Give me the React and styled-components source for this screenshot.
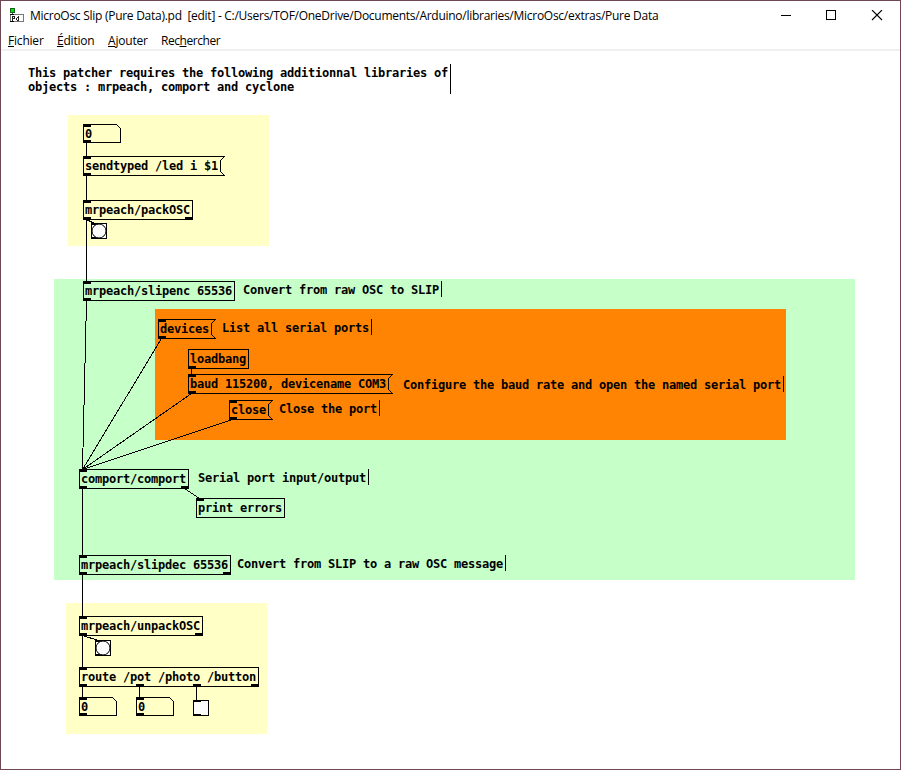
import React from "react";
import styled, { createGlobalStyle } from "styled-components";

const GlobalStyle = createGlobalStyle`
  * { box-sizing: border-box; }
  html, body { margin: 0; padding: 0; background: #fff; overflow: hidden; }
`;

const Window = styled.div`
  width: 901px;
  height: 770px;
  display: flex;
  flex-direction: column;
  border: 1px solid #6e4655;
  background: #fff;
  color: #000;
`;

const TitleBar = styled.header`
  display: flex;
  align-items: center;
  height: 29px;
  padding-left: 9px;
  flex: none;
`;

const AppIcon = styled.svg`
  width: 14px;
  height: 14px;
  margin-bottom: 1px;
  flex: none;
`;

const Title = styled.h1`
  margin: 0 0 0 6px;
  flex: 1;
  font: 400 12px/16px "Open Sans", "Noto Sans", sans-serif;
  letter-spacing: -0.27px;
  white-space: pre;
`;

const WindowControls = styled.div`
  display: flex;
  align-self: stretch;
`;

const ControlButton = styled.button`
  width: 46px;
  height: 29px;
  padding: 0;
  border: 0;
  background: transparent;
  display: flex;
  align-items: center;
  justify-content: center;
`;

const ControlGlyph = styled.svg`
  width: 12px;
  height: 11px;
  fill: none;
  stroke: #000;
`;

const MenuBar = styled.nav`
  display: flex;
  height: 21px;
  padding: 2px 0 0 7px;
  border-bottom: 2px solid #f0f0f0;
  flex: none;
`;

const MenuItem = styled.span`
  width: ${(p) => p.$width}px;
  font: 400 12px/17px "Open Sans", "Noto Sans", sans-serif;
  letter-spacing: ${(p) => p.$spacing || -0.2}px;
  white-space: nowrap;
`;

const AccessKey = styled.span`
  text-decoration: underline;
  text-decoration-thickness: 1px;
  text-underline-offset: 1px;
`;

const ORIGIN = { x: 1, y: 51 };

const Patch = styled.main`
  position: relative;
  flex: 1;
  overflow: hidden;
  font: 700 12px/14px "DejaVu Sans Mono", monospace;
  letter-spacing: -0.2245px;
`;

const Placed = styled.div`
  position: absolute;
  left: ${(p) => p.$x - ORIGIN.x}px;
  top: ${(p) => p.$y - ORIGIN.y}px;
  width: ${(p) => p.$w}px;
  height: ${(p) => p.$h}px;
  white-space: pre;
`;

const Backdrop = styled(Placed)`
  background: ${(p) => p.$color};
`;

const Comment = styled(Placed)`
  padding: 2px 0 0 2px;
  border-right: 1px solid #000;
`;

const NodeFrame = styled(Placed)`
  padding: 3px 0 0 2px;
`;

const NodeOutline = styled.svg`
  position: absolute;
  left: 0;
  top: 0;
  overflow: visible;
  fill: none;
  stroke: #000;
  shape-rendering: crispEdges;
`;

const NodeLabel = styled.span`
  position: relative;
`;

const Wires = styled.svg`
  position: absolute;
  left: 0;
  top: 0;
  width: 899px;
  height: 718px;
  stroke: #000;
  fill: none;
  shape-rendering: crispEdges;
`;

const outlines = {
  object: (w, h) => `M.5 .5H${w - 0.5}V${h - 0.5}H.5Z`,
  message: (w, h) =>
    `M${w} .5H.5V${h - 0.5}H${w}M${w - 0.5} .5L${w - 4.5} 4.5V${h - 4.5}L${w - 0.5} ${h - 0.5}`,
  number: (w, h) => `M.5 .5H${w - 4.5}L${w - 0.5} 4.5V${h - 0.5}H.5Z`,
};

function Node({ kind = "object", x, y, w, h = 20, inlets = [0], outlets = [0], label }) {
  const isControl = kind === "bang" || kind === "toggle";
  const portHeight = isControl ? 2 : 3;
  return (
    <NodeFrame $x={x} $y={y} $w={w} $h={h}>
      <NodeOutline width={w} height={h}>
        <path d={(outlines[kind] || outlines.object)(w, h)} fill={isControl ? "#fcfcfc" : "none"} />
        {inlets.map((px) => (
          <rect key={"i" + px} x={px} y="0" width="8" height={portHeight} fill="#000" stroke="none" />
        ))}
        {outlets.map((px) => (
          <rect key={"o" + px} x={px} y={h - portHeight} width="8" height={portHeight} fill="#000" stroke="none" />
        ))}
        {kind === "bang" && <circle cx="8" cy="8" r="7" fill="#fcfcfc" shapeRendering="geometricPrecision" />}
      </NodeOutline>
      {label && <NodeLabel>{label}</NodeLabel>}
    </NodeFrame>
  );
}

const backdrops = [
  { x: 68, y: 115, w: 201, h: 131, color: "#ffffc6" },
  { x: 54, y: 279, w: 801, h: 301, color: "#c6ffc7" },
  { x: 155, y: 309, w: 631, h: 131, color: "#ff8403" },
  { x: 66, y: 603, w: 201, h: 131, color: "#ffffc6" },
];

const nodes = [
  { kind: "number", x: 83, y: 124, w: 38, h: 19, label: "0" },
  { kind: "message", x: 83, y: 156, w: 142, label: "sendtyped /led i $1" },
  { x: 83, y: 200, w: 110, outlets: [0, 102], label: "mrpeach/packOSC" },
  { kind: "bang", x: 91, y: 223, w: 16, h: 16 },
  { x: 83, y: 281, w: 152, label: "mrpeach/slipenc 65536" },
  { kind: "message", x: 158, y: 319, w: 58, label: "devices" },
  { x: 188, y: 349, w: 61, inlets: [], label: "loadbang" },
  { kind: "message", x: 188, y: 374, w: 205, label: "baud 115200, devicename COM3" },
  { kind: "message", x: 229, y: 400, w: 44, label: "close" },
  { x: 79, y: 469, w: 110, outlets: [0, 102], label: "comport/comport" },
  { x: 196, y: 498, w: 89, outlets: [], label: "print errors" },
  { x: 79, y: 555, w: 152, outlets: [0, 144], label: "mrpeach/slipdec 65536" },
  { x: 79, y: 616, w: 124, outlets: [0, 116], label: "mrpeach/unpackOSC" },
  { kind: "bang", x: 95, y: 640, w: 16, h: 16 },
  { x: 79, y: 667, w: 180, outlets: [0, 57, 114, 172], label: "route /pot /photo /button" },
  { kind: "number", x: 79, y: 697, w: 38, h: 19, label: "0" },
  { kind: "number", x: 136, y: 697, w: 38, h: 19, label: "0" },
  { kind: "toggle", x: 193, y: 700, w: 16, h: 16 },
];

const comments = [
  { x: 26, y: 64, w: 425, h: 30, text: "This patcher requires the following additionnal libraries of\nobjects : mrpeach, comport and cyclone" },
  { x: 241, y: 281, w: 201, text: "Convert from raw OSC to SLIP" },
  { x: 220, y: 319, w: 152, text: "List all serial ports" },
  { x: 401, y: 376, w: 383, text: "Configure the baud rate and open the named serial port" },
  { x: 277, y: 400, w: 103, text: "Close the port" },
  { x: 196, y: 469, w: 173, text: "Serial port input/output" },
  { x: 235, y: 555, w: 271, text: "Convert from SLIP to a raw OSC message" },
];

const wires = [
  [86, 142, 86, 156],
  [86, 175, 86, 200],
  [86, 219, 86, 281],
  [86, 219, 94, 223],
  [86, 300, 82, 469],
  [161, 338, 82, 469],
  [191, 368, 191, 374],
  [191, 393, 82, 469],
  [232, 419, 82, 469],
  [82, 488, 82, 555],
  [184, 488, 199, 498],
  [82, 574, 82, 616],
  [82, 635, 82, 667],
  [82, 635, 98, 640],
  [82, 686, 82, 697],
  [139, 686, 139, 697],
  [196, 686, 196, 700],
];

export default function App() {
  return (
    <>
      <GlobalStyle />
      <Window>
        <TitleBar>
          <AppIcon viewBox="0 0 14 14" shapeRendering="crispEdges">
            <rect x="0.5" y="0.5" width="4" height="4" fill="#00e010" stroke="#14611a" />
            <path d="M2 5v1" stroke="#555" />
            <rect x="0.5" y="6.5" width="13" height="7" fill="#fff" stroke="#777" />
            <path d="M0 6.5h4M0 13.5h4" stroke="#000" />
            <path d="M2.5 8v5M3 8.5h1.5M3 10.5h1.5M4.5 9v1M8.5 7.5v5M6.5 10v2M7 9.5h1M7 12.5h1" stroke="#222" fill="none" />
          </AppIcon>
          <Title>{"MicroOsc Slip (Pure Data).pd  [edit] - C:/Users/TOF/OneDrive/Documents/Arduino/libraries/MicroOsc/extras/Pure Data"}</Title>
          <WindowControls>
            <ControlButton aria-label="Minimize">
              <ControlGlyph viewBox="0 0 12 11" shapeRendering="crispEdges"><path d="M2 5.5h10" /></ControlGlyph>
            </ControlButton>
            <ControlButton aria-label="Maximize">
              <ControlGlyph viewBox="0 0 12 11" shapeRendering="crispEdges"><path d="M1.5 .5h9v9h-9z" /></ControlGlyph>
            </ControlButton>
            <ControlButton aria-label="Close">
              <ControlGlyph viewBox="0 0 12 11"><path d="M1 0l10 10M11 0l-10 10" strokeWidth="1.1" /></ControlGlyph>
            </ControlButton>
          </WindowControls>
        </TitleBar>
        <MenuBar>
          <MenuItem $width={49}><AccessKey>F</AccessKey>ichier</MenuItem>
          <MenuItem $width={51}><AccessKey>É</AccessKey>dition</MenuItem>
          <MenuItem $width={53}><AccessKey>A</AccessKey>jouter</MenuItem>
          <MenuItem $width={62} $spacing={-0.45}>Rec<AccessKey>h</AccessKey>ercher</MenuItem>
        </MenuBar>
        <Patch>
          {backdrops.map((b) => (
            <Backdrop key={b.y} $x={b.x} $y={b.y} $w={b.w} $h={b.h} $color={b.color} />
          ))}
          <Wires viewBox="1 51 899 718">
            {wires.map(([x1, y1, x2, y2], i) => (
              <line key={i} x1={x1 + 0.5} y1={y1 + 0.5} x2={x2 + 0.5} y2={y2 + 0.5} />
            ))}
          </Wires>
          {nodes.map((n) => (
            <Node key={`${n.x}-${n.y}`} {...n} />
          ))}
          {comments.map((c) => (
            <Comment key={c.y + c.text} $x={c.x} $y={c.y} $w={c.w} $h={c.h || 16}>
              {c.text}
            </Comment>
          ))}
        </Patch>
      </Window>
    </>
  );
}
